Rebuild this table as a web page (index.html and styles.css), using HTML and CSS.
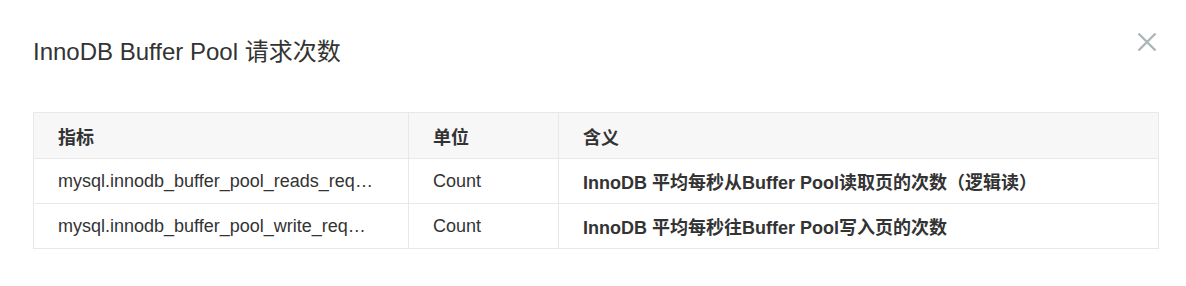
FILE: index.html
```html
<!DOCTYPE html>
<html lang="zh-CN">
<head>
<meta charset="utf-8">
<title>InnoDB Buffer Pool 请求次数</title>
<link rel="stylesheet" href="styles.css">
</head>
<body>
<div class="dialog">
  <div class="dialog-header">
    <h2 class="dialog-title">InnoDB Buffer Pool 请求次数</h2>
    <button class="close-btn" aria-label="关闭">
      <svg width="20" height="20" viewBox="0 0 20 20"><path d="M1.5 1.5 L18.5 18.5 M18.5 1.5 L1.5 18.5" stroke="#abb5ba" stroke-width="2.4" fill="none"/></svg>
    </button>
  </div>
  <table class="metrics">
    <colgroup>
      <col class="col-name">
      <col class="col-unit">
      <col>
    </colgroup>
    <thead>
      <tr><th>指标</th><th>单位</th><th>含义</th></tr>
    </thead>
    <tbody>
      <tr>
        <td title="mysql.innodb_buffer_pool_reads_requests">mysql.innodb_buffer_pool_reads_req…</td>
        <td>Count</td>
        <td class="desc">InnoDB 平均每秒从Buffer Pool读取页的次数（逻辑读）</td>
      </tr>
      <tr>
        <td title="mysql.innodb_buffer_pool_write_requests">mysql.innodb_buffer_pool_write_req…</td>
        <td>Count</td>
        <td class="desc">InnoDB 平均每秒往Buffer Pool写入页的次数</td>
      </tr>
    </tbody>
  </table>
</div>
</body>
</html>
```

FILE: styles.css
```css
html, body {
  margin: 0;
  padding: 0;
  background: #ffffff;
}
body {
  font-family: "Liberation Sans", Arial, "Noto Sans CJK SC", sans-serif;
  color: #333333;
}
.dialog {
  width: 1186px;
  height: 286px;
  box-sizing: border-box;
  padding: 32px 27px 0 33px;
}
.dialog-header {
  display: flex;
  justify-content: space-between;
  align-items: flex-start;
  height: 80px;
}
.dialog-title {
  margin: 4px 0 0 0;
  font-size: 24px;
  line-height: 32px;
  font-weight: normal;
  color: #333333;
}
.close-btn {
  border: 0;
  background: none;
  padding: 0;
  margin: 0 2px 0 0;
  width: 20px;
  height: 20px;
  display: block;
  cursor: pointer;
}
.close-btn svg { display: block; }
.metrics {
  width: 1126px;
  border-collapse: collapse;
  table-layout: fixed;
  font-size: 18px;
}
.col-name { width: 375px; }
.col-unit { width: 150px; }
.metrics th,
.metrics td {
  border: 1px solid #e8e8e8;
  padding: 0 24px;
  text-align: left;
  vertical-align: middle;
  white-space: nowrap;
}
.metrics th {
  background: #f7f7f7;
  height: 45px;
  font-weight: bold;
  color: #333333;
}
.metrics td {
  height: 44px;
}
.desc {
  font-weight: bold;
}
```
